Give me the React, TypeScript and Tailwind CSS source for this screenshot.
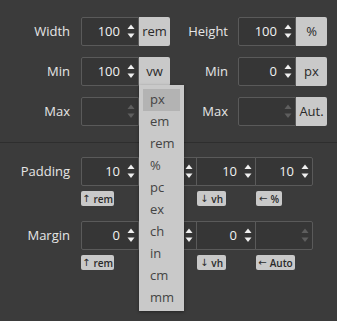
import React from "react";

const Spinner = ({ faded = false }: { faded?: boolean }) => (
  <svg width="8" height="15" viewBox="0 0 8 15" className="shrink-0">
    <path d="M4 0.5 L7.5 5 L0.5 5 Z" fill={faded ? "#5e5e5e" : "#f0f0f0"} />
    <path d="M0.5 9.5 L7.5 9.5 L4 14 Z" fill={faded ? "#5e5e5e" : "#f0f0f0"} />
  </svg>
);

const NumBox = ({
  value,
  faded = false,
  className = "",
}: {
  value?: string;
  faded?: boolean;
  className?: string;
}) => (
  <div
    className={
      "flex h-[29px] w-[58px] items-center justify-end gap-[7px] border border-[#5a5a5a] bg-[#363636] pr-[3px] " +
      className
    }
  >
    {value ? <span className="text-[13px] leading-none text-[#f2f2f2]">{value}</span> : null}
    <Spinner faded={faded} />
  </div>
);

const Unit = ({ label }: { label: string }) => (
  <div className="flex h-[29px] w-[31px] items-center justify-center rounded-r-[2px] bg-[#c9c9c9] text-[13px] text-[#2a2a2a]">
    {label}
  </div>
);

const Label = ({ text, w }: { text: string; w: string }) => (
  <div className={"text-right text-[13px] text-[#e6e6e6] " + w}>{text}</div>
);

const Badge = ({ arrow, text, w }: { arrow?: string; text?: string; w: string }) => (
  <div
    className={
      "flex h-[15px] items-center justify-center gap-[3px] rounded-[2px] bg-[#c9c9c9] text-[10px] font-semibold leading-none text-[#2a2a2a] " +
      w
    }
  >
    {arrow ? (
      <span className="text-[10px] font-normal" style={{ fontFamily: '"DejaVu Sans", sans-serif' }}>
        {arrow}
      </span>
    ) : null}
    {text ? <span>{text}</span> : null}
  </div>
);

export default function App() {
  const items = ["px", "em", "rem", "%", "pc", "ex", "ch", "in", "cm", "mm"];
  return (
    <div
      className="relative h-[321px] w-[337px] overflow-hidden bg-[#3b3b3b]"
      style={{ fontFamily: '"Open Sans", "Noto Sans", sans-serif' }}
    >
      <div className="flex flex-col gap-[11px] pt-[17px]">
        {[
          ["Width", "100", "rem", false, "Height", "100", "%", false],
          ["Min", "100", "vw", false, "Min", "0", "px", false],
          ["Max", "", "", true, "Max", "", "Aut.", true],
        ].map((r, i) => (
          <div key={i} className="flex items-center">
            <Label text={r[0] as string} w="w-[70px]" />
            <NumBox value={r[1] as string} faded={r[3] as boolean} className="ml-[11px] rounded-l-[2px]" />
            <Unit label={r[2] as string} />
            <Label text={r[4] as string} w="w-[58px]" />
            <NumBox value={r[5] as string} faded={r[7] as boolean} className="ml-[10px] rounded-l-[2px]" />
            <Unit label={r[6] as string} />
          </div>
        ))}
      </div>

      <div className="mt-[16px] border-t border-[#2e2e2e]" />

      <div className="mt-[14px] flex flex-col">
        <div className="flex items-center">
          <Label text="Padding" w="w-[70px]" />
          <div className="ml-[11px] flex">
            <NumBox value="10" className="rounded-l-[2px]" />
            <NumBox className="-ml-px w-[59px]" />
            <NumBox value="10" className="-ml-px w-[60px]" />
            <NumBox value="10" className="-ml-px w-[58px] rounded-r-[2px]" />
          </div>
        </div>
        <div className="ml-[81px] mt-[5px] flex">
          <Badge arrow="↑" text="rem" w="w-[33px]" />
          <Badge w="ml-[25px] w-[30px]" />
          <Badge arrow="↓" text="vh" w="ml-[28px] w-[29px]" />
          <Badge arrow="←" text="%" w="ml-[30px] w-[26px]" />
        </div>

        <div className="mt-[15px] flex items-center">
          <Label text="Margin" w="w-[70px]" />
          <div className="ml-[11px] flex">
            <NumBox value="0" className="rounded-l-[2px]" />
            <NumBox className="-ml-px w-[59px]" />
            <NumBox value="0" className="-ml-px w-[60px]" />
            <NumBox value="" faded className="-ml-px w-[58px] rounded-r-[2px]" />
          </div>
        </div>
        <div className="ml-[81px] mt-[5px] flex">
          <Badge arrow="↑" text="rem" w="w-[33px]" />
          <Badge w="ml-[25px] w-[30px]" />
          <Badge arrow="↓" text="vh" w="ml-[28px] w-[29px]" />
          <Badge arrow="←" text="Auto" w="ml-[30px] w-[39px]" />
        </div>
      </div>

      <div className="absolute left-[139px] top-[85px] w-[45px] bg-[#c9c9c9] px-[4px] pb-[2px] pt-[4px] shadow-[0_1px_3px_rgba(0,0,0,0.4)]">
        {items.map((it, i) => (
          <div
            key={it}
            className={
              "flex h-[22px] items-center pl-[7px] text-[13px] text-[#444] " +
              (i === 0 ? "bg-[#b3b3b3]" : "")
            }
          >
            {it}
          </div>
        ))}
      </div>
    </div>
  );
}
